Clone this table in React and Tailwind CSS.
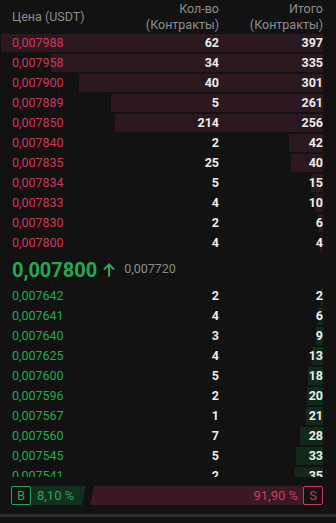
const asks = [
  ['0,007988', 62, 397],
  ['0,007958', 34, 335],
  ['0,007900', 40, 301],
  ['0,007889', 5, 261],
  ['0,007850', 214, 256],
  ['0,007840', 2, 42],
  ['0,007835', 25, 40],
  ['0,007834', 5, 15],
  ['0,007833', 4, 10],
  ['0,007830', 2, 6],
  ['0,007800', 4, 4],
];

const bids = [
  ['0,007642', 2, 2],
  ['0,007641', 4, 6],
  ['0,007640', 3, 9],
  ['0,007625', 4, 13],
  ['0,007600', 5, 18],
  ['0,007596', 2, 20],
  ['0,007567', 1, 21],
  ['0,007560', 7, 28],
  ['0,007545', 5, 33],
  ['0,007541', 2, 35],
];

const MAX = 397;

function Row({ price, qty, total, side }) {
  const red = side === 'ask';
  return (
    <div className="relative h-[18px] shrink-0">
      <div
        className={`absolute right-0 top-0 bottom-0 ${red ? 'bg-[#2b191f]' : 'bg-[#13291c]'}`}
        style={{ width: `${(total / MAX) * 100}%` }}
      />
      <div className="relative flex h-full items-center pl-[11px] text-[12.5px] leading-none">
        <span className={`flex-1 ${red ? 'text-[#d3365f]' : 'text-[#25a84f]'}`}>{price}</span>
        <span className="w-[80px] text-right font-bold text-[#ececec]">{qty}</span>
        <span className="w-[104px] text-right font-bold text-[#ececec]">{total}</span>
      </div>
    </div>
  );
}

export default function App() {
  return (
    <div className="min-h-screen w-[336px] overflow-hidden bg-[#121212] font-['Roboto',sans-serif]">
      <div className="pl-px pr-[13px]">
        {/* Header */}
        <div className="flex h-[33px] items-center pl-[11px] text-[12.5px] leading-4 text-[#8e8e8e]">
          <span className="flex-1">Цена (USDT)</span>
          <span className="w-[100px] text-right">
            Кол-во
            <br />
            (Контракты)
          </span>
          <span className="w-[104px] text-right">
            Итого
            <br />
            (Контракты)
          </span>
        </div>

        {/* Asks */}
        <div className="mt-px flex flex-col gap-[2px]">
          {asks.map(([p, q, t]) => (
            <Row key={p} price={p} qty={q} total={t} side="ask" />
          ))}
        </div>

        {/* Last price */}
        <div className="flex h-[35px] items-center pl-[11px]">
          <span className="text-[20px] font-bold leading-none text-[#25a84f]">0,007800</span>
          <svg width="12" height="14" viewBox="0 0 12 14" className="ml-[6px]" fill="none" stroke="#25a84f" strokeWidth="2" strokeLinecap="round" strokeLinejoin="round">
            <path d="M6 13V1.5" />
            <path d="M1.5 6L6 1.5L10.5 6" />
          </svg>
          <span className="ml-[9px] text-[12.5px] leading-none text-[#8a8a8a]">0,007720</span>
        </div>

        {/* Bids */}
        <div className="flex h-[190px] flex-col gap-[2px] overflow-hidden">
          {bids.map(([p, q, t]) => (
            <Row key={p} price={p} qty={q} total={t} side="bid" />
          ))}
        </div>
      </div>

      {/* Buy / sell ratio */}
      <div className="mt-[9px] flex h-[19px] items-stretch pl-[11px] pr-[13px] text-[13px] leading-none">
        <div className="flex w-5 items-center justify-center rounded-[2px] border border-[#25a84f] text-[#25a84f]">B</div>
        <div className="flex w-[55px] items-center bg-[#13301e] pl-[6px] text-[#25a84f] [clip-path:polygon(0_0,100%_0,calc(100%-4px)_100%,0_100%)]">
          8,10 %
        </div>
        <div className="flex flex-1 items-center justify-end bg-[#3a1b25] pr-[5px] text-[#d3365f] [clip-path:polygon(8px_0,100%_0,100%_100%,4px_100%)]">
          91,90 %
        </div>
        <div className="flex w-5 items-center justify-center rounded-[2px] border border-[#d3365f] text-[#d3365f]">S</div>
      </div>

      <div className="mt-[9px] h-[3px] bg-[#2c2c2c]" />
    </div>
  );
}
